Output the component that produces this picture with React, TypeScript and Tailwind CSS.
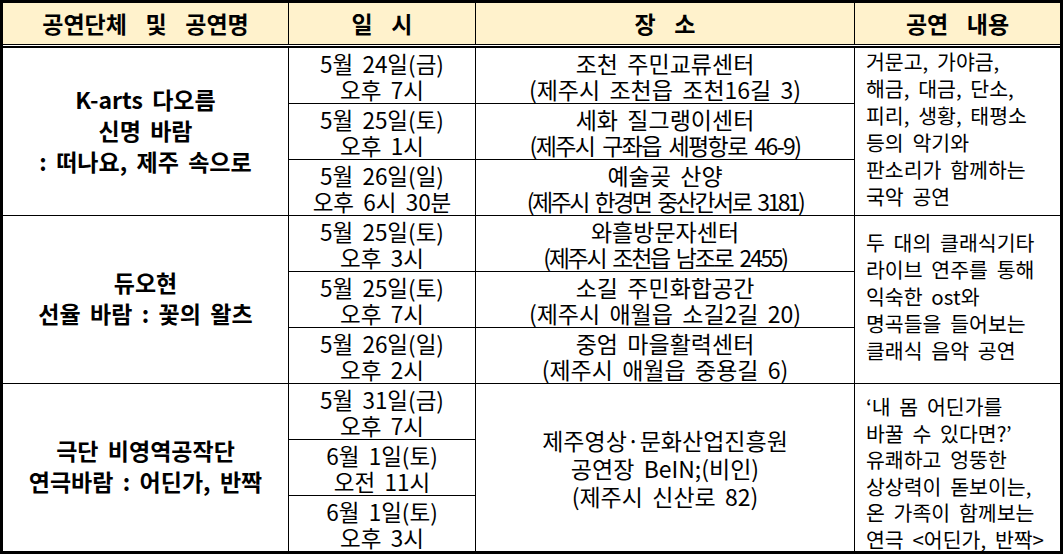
import React from "react";

const FONT = { fontFamily: "'Noto Sans CJK KR', 'Noto Sans', sans-serif", wordSpacing: "0.26em" };

type Sub = { date: [string, string]; place?: [string, string]; tight?: string };

function DateCell({ lines, last }: { lines: [string, string]; last?: boolean }) {
  return (
    <div className={`flex-1 min-h-0 flex flex-col items-center justify-center text-[22.5px] leading-[26px] text-black ${last ? "" : "border-b border-black"}`}>
      <div className="whitespace-nowrap">{lines[0]}</div>
      <div className="whitespace-nowrap">{lines[1]}</div>
    </div>
  );
}

function PlaceCell({ lines, last, tight }: { lines: [string, string]; last?: boolean; tight?: string }) {
  return (
    <div className={`flex-1 min-h-0 flex flex-col items-center justify-center text-[23px] leading-[26px] text-black ${last ? "" : "border-b border-black"}`}>
      <div className="whitespace-nowrap">{lines[0]}</div>
      <div className={`whitespace-nowrap ${tight ?? ""}`}>{lines[1]}</div>
    </div>
  );
}

function Group({
  title,
  subs,
  place,
  content,
  last,
}: {
  title: string[];
  subs: Sub[];
  place?: string[];
  content: string[];
  last?: boolean;
}) {
  return (
    <div className={`flex ${last ? "flex-1 min-h-0" : "h-[168px] shrink-0 border-b border-black"}`}>
      <div className="w-[286px] border-r border-black flex flex-col items-center justify-center pb-[3px] font-bold text-[23px] leading-[31px] text-black">
        {title.map((t, i) => (
          <div key={i} className="whitespace-nowrap">{t}</div>
        ))}
      </div>
      <div className="w-[187px] border-r border-black flex flex-col">
        {subs.map((s, i) => (
          <DateCell key={i} lines={s.date} last={i === subs.length - 1} />
        ))}
      </div>
      <div className="w-[379px] border-r border-black flex flex-col">
        {place ? (
          <div className="flex-1 flex flex-col items-center justify-center text-[23px] leading-[28px] text-black">
            {place.map((p, i) => (
              <div key={i} className="whitespace-nowrap">{p}</div>
            ))}
          </div>
        ) : (
          subs.map((s, i) => (
            <PlaceCell key={i} lines={s.place!} tight={s.tight} last={i === subs.length - 1} />
          ))
        )}
      </div>
      <div
        className={`w-[205px] min-h-0 flex flex-col pl-[11px] text-[20.5px] text-black ${
          last ? "justify-start pt-[9px] leading-[26.6px]" : "justify-center pb-[6px] leading-[27px]"
        }`}
      >
        {content.map((c, i) => (
          <div key={i} className="whitespace-nowrap">{c}</div>
        ))}
      </div>
    </div>
  );
}

export default function App() {
  return (
    <div className="w-[1063px] h-[554px] bg-white" style={FONT}>
      <div className="w-full h-full border-[3px] border-black flex flex-col box-border">
        <div className="h-[41px] shrink-0 bg-[#fff2cc] flex font-bold text-[23px] text-black [word-spacing:0.58em]">
          <div className="w-[286px] border-r border-black flex items-center justify-center">공연단체 및 공연명</div>
          <div className="w-[187px] border-r border-black flex items-center justify-center">일 시</div>
          <div className="w-[379px] border-r border-black flex items-center justify-center">장 소</div>
          <div className="w-[205px] flex items-center justify-center">공연 내용</div>
        </div>
        <div className="h-[1px] shrink-0 bg-black" />
        <div className="h-[1px] shrink-0 bg-white" />
        <div className="h-[2px] shrink-0 bg-black" />
        <Group
          title={["K-arts 다오름", "신명 바람", ": 떠나요, 제주 속으로"]}
          subs={[
            { date: ["5월 24일(금)", "오후 7시"], place: ["조천 주민교류센터", "(제주시 조천읍 조천16길 3)"] },
            { date: ["5월 25일(토)", "오후 1시"], place: ["세화 질그랭이센터", "(제주시 구좌읍 세평항로 46-9)"], tight: "tracking-[-0.07em]" },
            { date: ["5월 26일(일)", "오후 6시 30분"], place: ["예술곶 산양", "(제주시 한경면 중산간서로 3181)"], tight: "tracking-[-0.11em]" },
          ]}
          content={["거문고, 가야금,", "해금, 대금, 단소,", "피리, 생황, 태평소", "등의 악기와", "판소리가 함께하는", "국악 공연"]}
        />
        <Group
          title={["듀오현", "선율 바람 : 꽃의 왈츠"]}
          subs={[
            { date: ["5월 25일(토)", "오후 3시"], place: ["와흘방문자센터", "(제주시 조천읍 남조로 2455)"], tight: "tracking-[-0.1em]" },
            { date: ["5월 25일(토)", "오후 7시"], place: ["소길 주민화합공간", "(제주시 애월읍 소길2길 20)"] },
            { date: ["5월 26일(일)", "오후 2시"], place: ["중엄 마을활력센터", "(제주시 애월읍 중용길 6)"] },
          ]}
          content={["두 대의 클래식기타", "라이브 연주를 통해", "익숙한 ost와", "명곡들을 들어보는", "클래식 음악 공연"]}
        />
        <Group
          last
          title={["극단 비영역공작단", "연극바람 : 어딘가, 반짝"]}
          subs={[
            { date: ["5월 31일(금)", "오후 7시"] },
            { date: ["6월 1일(토)", "오전 11시"] },
            { date: ["6월 1일(토)", "오후 3시"] },
          ]}
          place={["제주영상·문화산업진흥원", "공연장 BeIN;(비인)", "(제주시 신산로 82)"]}
          content={["‘내 몸 어딘가를", "바꿀 수 있다면?’", "유쾌하고 엉뚱한", "상상력이 돋보이는,", "온 가족이 함께보는", "연극 <어딘가, 반짝>"]}
        />
      </div>
    </div>
  );
}
